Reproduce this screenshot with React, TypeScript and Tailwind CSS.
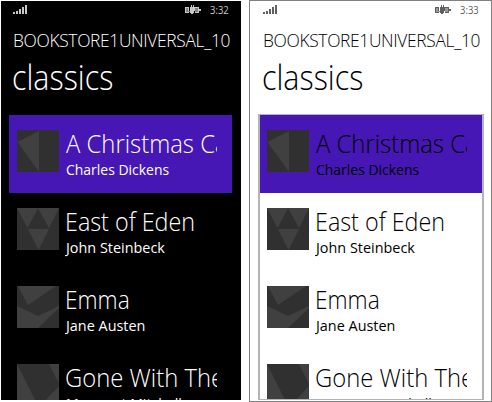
type Book = { title: string; author: string; titleClass: string; authorClass: string; shapes: string[] };

const books: Book[] = [
  {
    title: 'A Christmas Carol',
    author: 'Charles Dickens',
    titleClass: 'ml-px scale-x-[0.935]',
    authorClass: 'scale-x-[0.93]',
    shapes: ['22,1 22,42 0.5,12'],
  },
  {
    title: 'East of Eden',
    author: 'John Steinbeck',
    titleClass: 'scale-x-[0.915]',
    authorClass: 'scale-x-[0.96]',
    shapes: ['0,0 21,0 10.5,20', '21,0 42,0 32,20', '11,21 32,21 21.5,42'],
  },
  {
    title: 'Emma',
    author: 'Jane Austen',
    titleClass: 'scale-x-[0.89]',
    authorClass: 'scale-x-[0.96]',
    shapes: ['1,0 39,0 11,19', '0,20 21,30 42,20 42,22 21,42 0,42'],
  },
  {
    title: 'Gone With The Wind',
    author: 'Margaret Mitchell',
    titleClass: 'scale-x-[0.935]',
    authorClass: 'scale-x-[0.94]',
    shapes: ['0,0 21,42 0,42', '32,0 42,0 42,20', '42,22 42,42 23,42'],
  },
];

function Cover({ shapes }: { shapes: string[] }) {
  return (
    <svg className="block size-[42px] shrink-0 bg-[#303030]" viewBox="0 0 42 42">
      {shapes.map((points) => (
        <polygon key={points} points={points} fill="#404040" />
      ))}
    </svg>
  );
}

function Signal() {
  return (
    <svg className="block h-[10px] w-[15px]" viewBox="0 0 15 10" fill="currentColor" shapeRendering="crispEdges">
      <path d="M0 7h2v2H0zM3 6h2v3H3zM6 4h2v5H6zM9 2h2v7H9zM12 0h2v9h-2z" />
    </svg>
  );
}

function Battery() {
  return (
    <svg className="block h-[10px] w-4" viewBox="0 0 16 10" fill="currentColor" shapeRendering="crispEdges">
      <path d="M0 2h4v4H3V3H1v4h3v1H0zM10 2h4v6h-4V7h3V3h-3zM14 4h2v2h-2z" />
      <path d="M1 3h2v4H1zM3 6h2v1H3zM10 3h3v4h-3z" opacity="0.65" />
      <path d="M5 2h1V0h1v2h1V0h1v2h1v4H9v2H8v1H6V8H5z" />
    </svg>
  );
}

function Phone({ dark, time }: { dark: boolean; time: string }) {
  return (
    <section
      className={
        dark
          ? 'flex h-[399px] w-60 shrink-0 flex-col overflow-hidden bg-black text-white'
          : 'flex h-[399px] w-60 shrink-0 flex-col overflow-hidden bg-white text-black'
      }
    >
      <div
        className={
          dark
            ? 'flex h-4 shrink-0 items-start pl-3 pr-3 pt-[4px] text-[#c8c8c8]'
            : 'flex h-4 shrink-0 items-start pl-3 pr-3 pt-[4px] text-[#606060]'
        }
      >
        <Signal />
        <div className="ml-auto mr-[9px]">
          <Battery />
        </div>
        <span className="w-[19px] origin-left scale-x-[0.9] whitespace-nowrap text-[10.5px] leading-[10px]">{time}</span>
      </div>
      <header className="shrink-0 whitespace-nowrap pl-3">
        <div className="h-[42px] w-fit origin-left scale-x-[0.966] pt-[11px] text-[18px] font-light leading-[24px] tracking-[-0.35px]">
          BOOKSTORE1UNIVERSAL_10
        </div>
        <h1 className="-ml-px h-[55px] w-fit origin-left scale-x-[0.895] text-[34px] font-light leading-[36px]">classics</h1>
      </header>
      <ul
        className={
          dark
            ? 'ml-2 h-[286px] w-[223px] shrink-0 overflow-hidden pt-px'
            : 'ml-[7px] h-[286px] w-[226px] shrink-0 overflow-hidden border-x-2 border-y border-[#b4b4b4]'
        }
      >
        {books.map((book, index) => (
          <li
            key={book.title}
            className={`flex h-[78px] pt-[15px] ${dark ? 'pl-2' : 'pl-[7px]'} ${index === 0 ? 'bg-[#4617b4]' : ''}`}
          >
            <Cover shapes={book.shapes} />
            <div className="-mt-1 ml-[6px] w-[152px] overflow-hidden whitespace-nowrap">
              <div className={`h-[33px] w-fit origin-left text-[25.5px] font-light leading-[34px] ${book.titleClass}`}>
                {book.title}
              </div>
              <div className={`ml-px w-fit origin-left text-[15px] leading-[20px] ${book.authorClass}`}>{book.author}</div>
            </div>
          </li>
        ))}
      </ul>
    </section>
  );
}

export default function App() {
  return (
    <main className="flex h-[402px] w-[492px] overflow-hidden bg-white font-['Open_Sans','Noto_Sans',sans-serif]">
      <div className="pl-px pt-px">
        <Phone dark time="3:32" />
      </div>
      <div className="ml-2 h-[402px] w-[243px] border border-[#808080] pl-px">
        <Phone dark={false} time="3:33" />
      </div>
    </main>
  );
}
